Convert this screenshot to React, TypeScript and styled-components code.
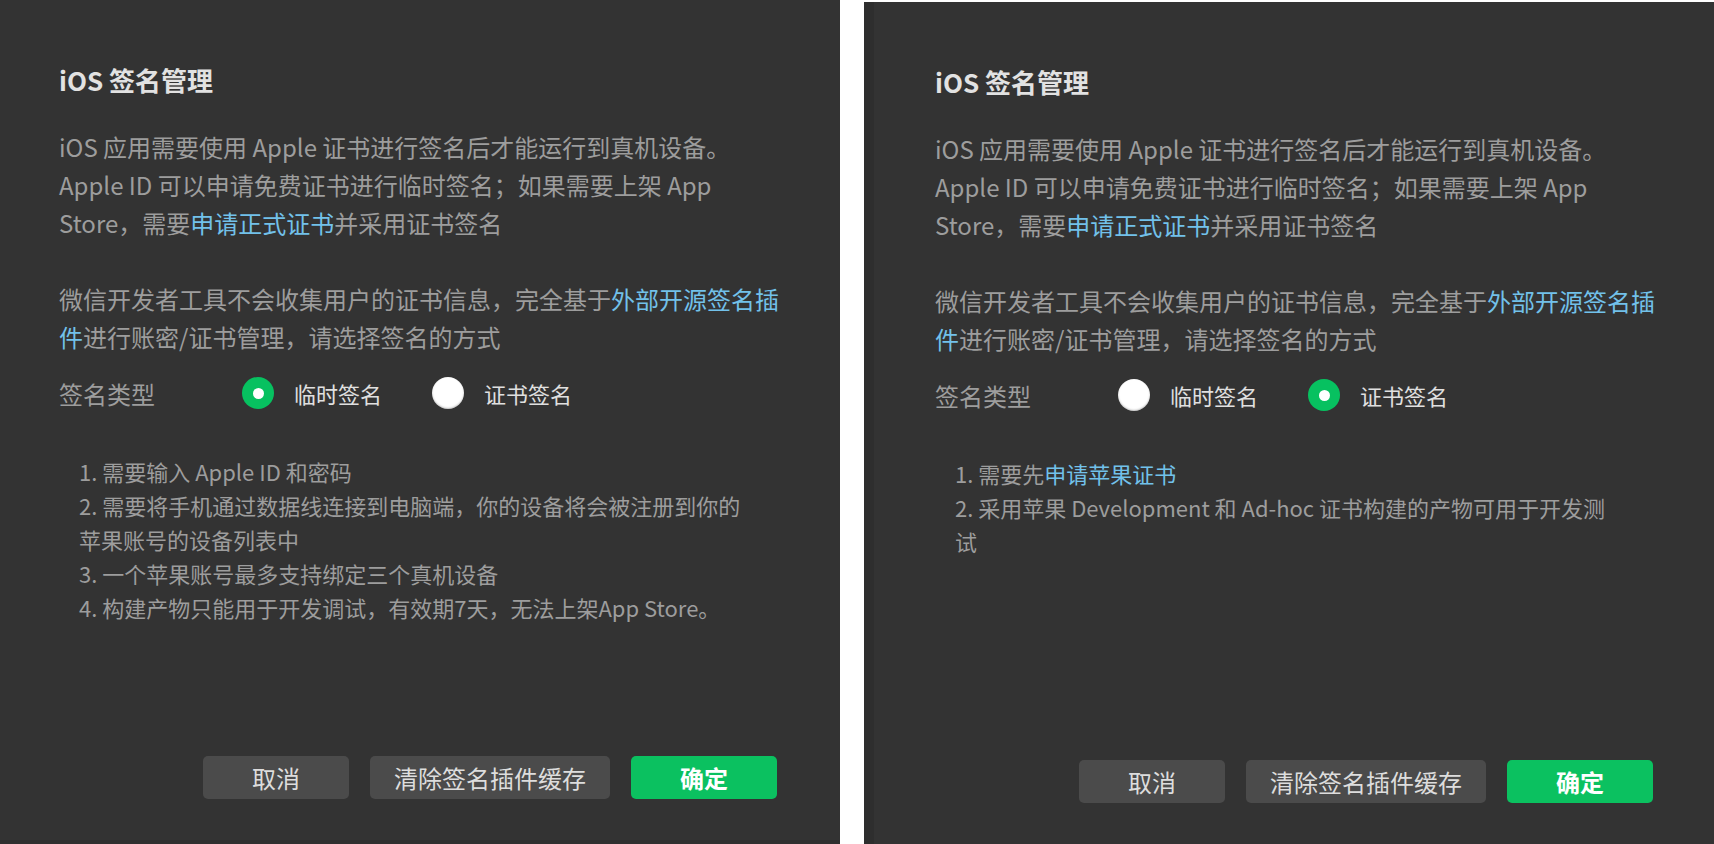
import React from "react";
import styled, { createGlobalStyle } from "styled-components";

const GlobalStyle = createGlobalStyle`
  html, body {
    margin: 0;
    padding: 0;
    background: #ffffff;
  }
  body {
    font-family: "Noto Sans CJK SC", "Noto Sans", sans-serif;
  }
`;

const Page = styled.div`
  display: flex;
  align-items: flex-start;
  gap: 24px;
  width: 1714px;
  height: 844px;
  overflow: hidden;
`;

const Panel = styled.div<{ $shifted?: boolean }>`
  box-sizing: border-box;
  display: flex;
  flex-direction: column;
  background: #333333;
  width: ${(p) => (p.$shifted ? "850px" : "840px")};
  height: ${(p) => (p.$shifted ? "842px" : "844px")};
  margin-top: ${(p) => (p.$shifted ? "2px" : "0")};
  border-left: ${(p) => (p.$shifted ? "10px solid #2e2e2e" : "none")};
  border-bottom: ${(p) => (p.$shifted ? "none" : "4px solid #2f2f2f")};
  padding: 62px ${(p) => (p.$shifted ? "61px" : "63px")} 41px
    ${(p) => (p.$shifted ? "61px" : "59px")};
`;

const Title = styled.h1`
  margin: 0;
  font-size: 26px;
  line-height: 36px;
  font-weight: 700;
  color: #e2e2e2;
`;

const Paragraph = styled.p`
  margin: 30px 0 0;
  font-size: 24px;
  line-height: 38px;
  color: #9d9d9d;
  white-space: nowrap;

  & + & {
    margin-top: 38px;
  }
`;

const Link = styled.span`
  color: #72c1ea;
`;

const RadioRow = styled.div`
  display: flex;
  align-items: center;
  height: 40px;
  margin-top: 17px;
`;

const RowLabel = styled.span`
  width: 183px;
  font-size: 24px;
  color: #9d9d9d;
`;

const Option = styled.label`
  display: flex;
  align-items: center;
  gap: 20px;
  width: 190px;
  font-size: 22px;
  color: #e0e0e0;
`;

const Circle = styled.span<{ $checked: boolean }>`
  position: relative;
  width: 32px;
  height: 32px;
  border-radius: 50%;
  flex-shrink: 0;
  background: ${(p) => (p.$checked ? "#07c160" : "#ffffff")};
  box-shadow: ${(p) =>
    p.$checked ? "none" : "inset 0 -1px 2px rgba(0, 0, 0, 0.25)"};

  &::after {
    content: "";
    display: ${(p) => (p.$checked ? "block" : "none")};
    position: absolute;
    left: 10.5px;
    top: 10.5px;
    width: 11px;
    height: 11px;
    border-radius: 50%;
    background: #ffffff;
  }
`;

const Steps = styled.ol`
  list-style: none;
  margin: 41px 0 0;
  padding: 0 0 0 20px;
  font-size: 22px;
  line-height: 34px;
  color: #9d9d9d;
  white-space: nowrap;
`;

const Footer = styled.div`
  margin-top: auto;
  display: flex;
  justify-content: flex-end;
  gap: 21px;
`;

const Button = styled.button<{ $primary?: boolean }>`
  box-sizing: border-box;
  min-width: 146px;
  height: 43px;
  padding: 0 24px;
  border: none;
  border-radius: 5px;
  font-family: inherit;
  font-size: 24px;
  font-weight: ${(p) => (p.$primary ? 700 : 400)};
  background: ${(p) => (p.$primary ? "#0bc160" : "#4b4b4b")};
  color: ${(p) => (p.$primary ? "#ffffff" : "#dddddd")};
`;

type Mode = "temp" | "cert";

const Dialog: React.FC<{ mode: Mode; shifted?: boolean }> = ({
  mode,
  shifted,
}) => (
  <Panel $shifted={shifted}>
    <Title>iOS 签名管理</Title>
    <Paragraph>
      iOS 应用需要使用 Apple 证书进行签名后才能运行到真机设备。
      <br />
      Apple ID 可以申请免费证书进行临时签名；如果需要上架 App
      <br />
      Store，需要<Link>申请正式证书</Link>并采用证书签名
    </Paragraph>
    <Paragraph>
      微信开发者工具不会收集用户的证书信息，完全基于
      <Link>
        外部开源签名插
        <br />件
      </Link>
      进行账密/证书管理，请选择签名的方式
    </Paragraph>
    <RadioRow>
      <RowLabel>签名类型</RowLabel>
      <Option>
        <Circle $checked={mode === "temp"} />
        临时签名
      </Option>
      <Option>
        <Circle $checked={mode === "cert"} />
        证书签名
      </Option>
    </RadioRow>
    {mode === "temp" ? (
      <Steps>
        <li>1. 需要输入 Apple ID 和密码</li>
        <li>
          2. 需要将手机通过数据线连接到电脑端，你的设备将会被注册到你的
          <br />
          苹果账号的设备列表中
        </li>
        <li>3. 一个苹果账号最多支持绑定三个真机设备</li>
        <li>4. 构建产物只能用于开发调试，有效期7天，无法上架App Store。</li>
      </Steps>
    ) : (
      <Steps>
        <li>
          1. 需要先<Link>申请苹果证书</Link>
        </li>
        <li>
          2. 采用苹果 Development 和 Ad-hoc 证书构建的产物可用于开发测
          <br />试
        </li>
      </Steps>
    )}
    <Footer>
      <Button>取消</Button>
      <Button>清除签名插件缓存</Button>
      <Button $primary>确定</Button>
    </Footer>
  </Panel>
);

export default function App() {
  return (
    <>
      <GlobalStyle />
      <Page>
        <Dialog mode="temp" />
        <Dialog mode="cert" shifted />
      </Page>
    </>
  );
}
